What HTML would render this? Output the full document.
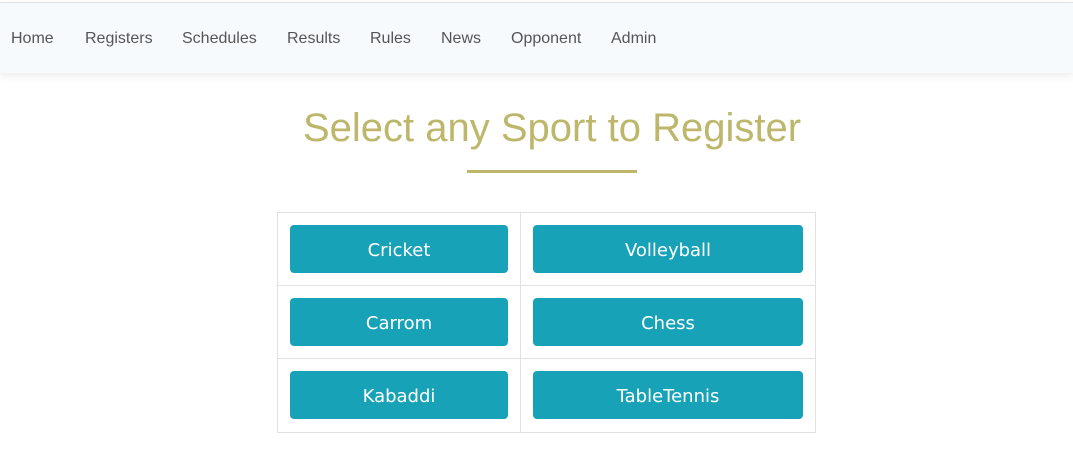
<!DOCTYPE html>
<html><head><style>
body{margin:0;background:#fff;font-family:"Liberation Sans",Arial,sans-serif;width:1073px;height:458px;overflow:hidden;position:relative}
.nav{position:absolute;left:0;top:2px;width:1073px;height:70px;background:#f7fafd;border-top:1px solid #dde2e6;box-shadow:0 3px 8px rgba(0,0,0,0.08)}
.nav span{position:absolute;top:27px;font-size:16px;color:#555}
h1{position:absolute;left:0;width:1104px;text-align:center;top:106px;margin:0;font-weight:normal;font-size:40px;color:#bdb76b}
.line{position:absolute;left:467px;top:170px;width:170px;height:3px;background:#bdb76b}
.tbl{position:absolute;left:277px;top:212px;width:537px;height:219px;border:1px solid #dee2e6}
.h{position:absolute;left:0;width:537px;height:1px;background:#dee2e6}
.v{position:absolute;left:242px;top:0;width:1px;height:219px;background:#dee2e6}
.b{position:absolute;height:48px;background:#17a2b8;border-radius:4px;color:#fff;font-family:"DejaVu Sans",sans-serif;font-size:18px;line-height:51px;text-align:center}
</style></head><body>
<div class="nav">
<span style="left:11px">Home</span><span style="left:85px">Registers</span><span style="left:182px">Schedules</span><span style="left:287px">Results</span><span style="left:370px">Rules</span><span style="left:441px">News</span><span style="left:511px">Opponent</span><span style="left:611px">Admin</span>
</div>
<h1>Select any Sport to Register</h1>
<div class="line"></div>
<div class="tbl">
<div class="h" style="top:72px"></div><div class="h" style="top:145px"></div><div class="v"></div>
<div class="b" style="left:12px;top:12px;width:218px">Cricket</div>
<div class="b" style="left:255px;top:12px;width:270px">Volleyball</div>
<div class="b" style="left:12px;top:85px;width:218px">Carrom</div>
<div class="b" style="left:255px;top:85px;width:270px">Chess</div>
<div class="b" style="left:12px;top:158px;width:218px">Kabaddi</div>
<div class="b" style="left:255px;top:158px;width:270px">TableTennis</div>
</div>
</body></html>
